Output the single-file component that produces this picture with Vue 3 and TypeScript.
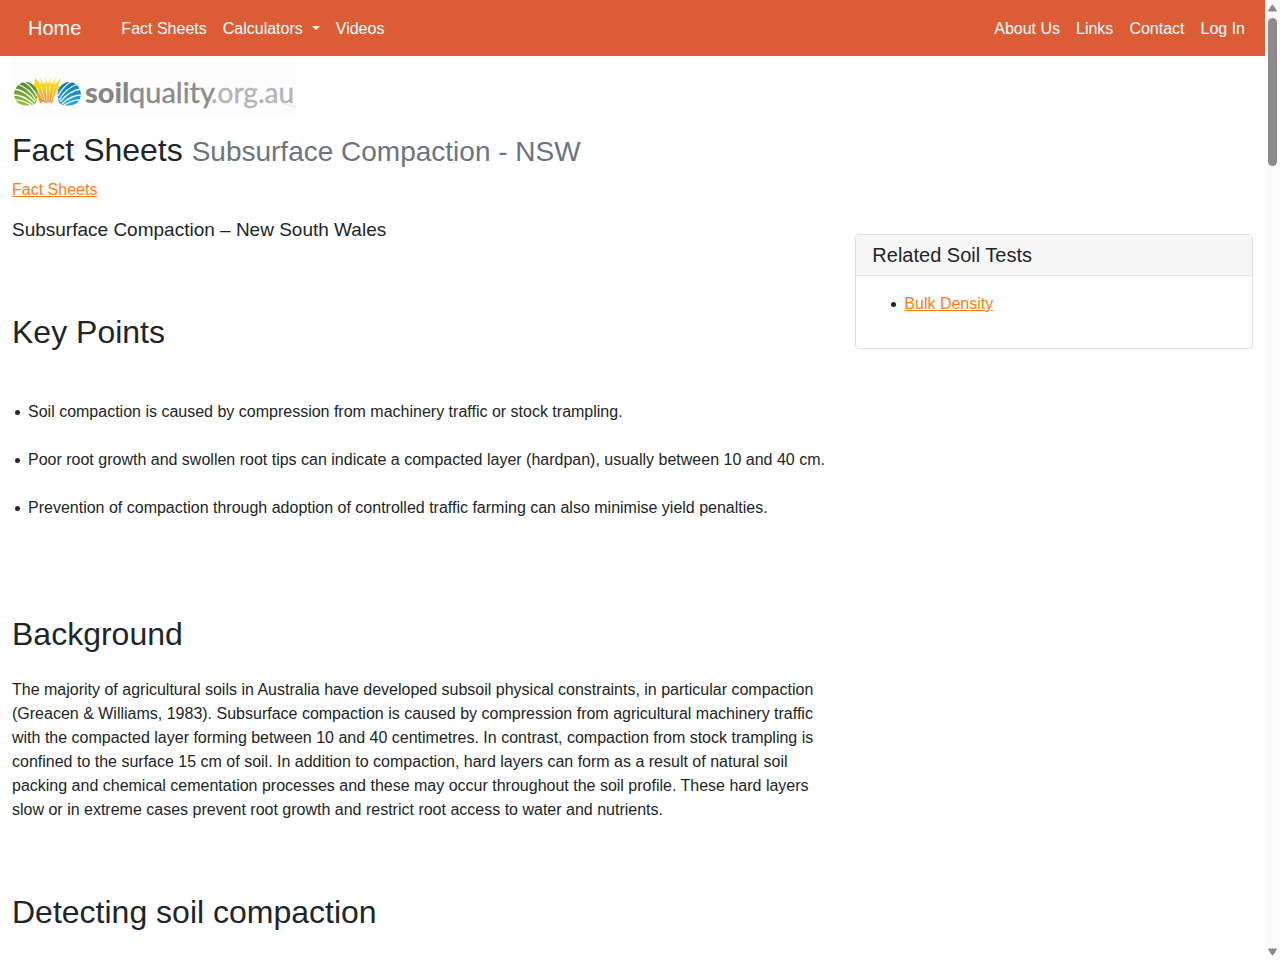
<script setup lang="ts">
interface NavItem {
  label: string
  menu?: boolean
}

const mainNav: NavItem[] = [
  { label: 'Fact Sheets' },
  { label: 'Calculators', menu: true },
  { label: 'Videos' },
]
const sideNav: NavItem[] = [
  { label: 'About Us' },
  { label: 'Links' },
  { label: 'Contact' },
  { label: 'Log In' },
]
const keyPoints: string[] = [
  'Soil compaction is caused by compression from machinery traffic or stock trampling.',
  'Poor root growth and swollen root tips can indicate a compacted layer (hardpan), usually between 10 and 40 cm.',
  'Prevention of compaction through adoption of controlled traffic farming can also minimise yield penalties.',
]
const soilTests: string[] = ['Bulk Density']
</script>

<template>
  <div class="window">
    <div class="page">
      <nav class="navbar">
        <a class="brand" href="#">Home</a>
        <ul class="nav">
          <li v-for="item in mainNav" :key="item.label">
            <button v-if="item.menu" class="nav-link" type="button" aria-haspopup="true">
              {{ item.label }}<span class="caret"></span>
            </button>
            <a v-else class="nav-link" href="#">{{ item.label }}</a>
          </li>
        </ul>
        <ul class="nav nav-end">
          <li v-for="item in sideNav" :key="item.label">
            <a class="nav-link" href="#">{{ item.label }}</a>
          </li>
        </ul>
      </nav>

      <header class="masthead">
        <a class="logo" href="#" aria-label="soilquality.org.au">
          <svg width="285" height="58" viewBox="0 0 285 58">
            <defs>
              <linearGradient id="leaf" x1="0" y1="0" x2="0" y2="1">
                <stop offset="0" stop-color="#4f8430" />
                <stop offset="1" stop-color="#9cc52c" />
              </linearGradient>
              <linearGradient id="sun" gradientUnits="userSpaceOnUse" x1="0" y1="21" x2="0" y2="46">
                <stop offset="0" stop-color="#fdd800" />
                <stop offset="0.4" stop-color="#fdd21c" />
                <stop offset="1" stop-color="#f0862c" />
              </linearGradient>
              <linearGradient id="water" x1="0" y1="0" x2="0" y2="1">
                <stop offset="0" stop-color="#0878bd" />
                <stop offset="1" stop-color="#22aae6" />
              </linearGradient>
            </defs>
            <rect width="285" height="58" fill="#fdfdfd" />
            <path
              fill="url(#sun)"
              d="M23 22l5 6 2 0-3-7 5 7 2-1-2-7 3 7h2l3-7-2 7 2 1 5-7-3 7 2 0 5-6-3 8 2 1-4 5-4 11-1 0-1-2-1 2-1-2-1 3-1-3-1 3-1-3-1 2-1-2-1 2-1 0-4-11-4-5 2-1z"
            />
            <path
              d="M25 32l6 12M29 30l4 15M34 29l1 16M38 29l-1 16M43 30l-4 15M47 32l-6 12"
              stroke="#fdfdfd"
              stroke-width="0.800"
              fill="none"
            />
            <path
              fill="url(#leaf)"
              d="M2 38C3 30 8 26 14 26c5 0 9 4 11 8 1 4 0 9-1 13-6 4-16 3-19-1-2-3-3-5-3-8z"
            />
            <path
              d="M10 25c7 3 12 9 15 15M5 28c9 3 15 9 19 16M2 33c9 1 16 7 21 13M1 39c9 0 15 4 20 9M1 44c7-1 13 2 18 5"
              stroke="#fdfdfd"
              stroke-width="1.300"
              fill="none"
            />
            <path
              fill="url(#water)"
              d="M69 38c-1-8-6-12-12-12-5 0-9 4-11 8-1 4 0 9 1 13 6 4 16 3 19-1 2-3 3-5 3-8z"
            />
            <path
              d="M61 25c-7 3-12 9-15 15M66 28c-9 3-15 9-19 16M69 33c-9 1-16 7-21 13M70 39c-9 0-15 4-20 9M70 44c-7-1-13 2-18 5"
              stroke="#fdfdfd"
              stroke-width="1.300"
              fill="none"
            />
            <path d="M264 46c7 1 14 2 20 4v2c-6-2-12-4-20-6z" fill="#eeeee9" />
            <text x="73" y="47" class="logo-soil">soil</text>
            <text x="117" y="47" class="logo-quality">quality</text>
            <text x="199" y="47" class="logo-domain">.org.au</text>
          </svg>
        </a>
        <h1>Fact Sheets <small>Subsurface Compaction - NSW</small></h1>
        <a class="link" href="#">Fact Sheets</a>
      </header>

      <div class="columns">
        <main class="article">
          <p class="lead">Subsurface Compaction – New South Wales</p>
          <h2>Key Points</h2>
          <ul class="bullets points">
            <li v-for="point in keyPoints" :key="point">{{ point }}</li>
          </ul>
          <h2>Background</h2>
          <p class="body-text">
            The majority of agricultural soils in Australia have developed subsoil physical constraints, in
            particular compaction (Greacen &amp; Williams, 1983). Subsurface compaction is caused by compression
            from agricultural machinery traffic with the compacted layer forming between 10 and 40 centimetres.
            In contrast, compaction from stock trampling is confined to the surface 15 cm of soil. In addition
            to compaction, hard layers can form as a result of natural soil packing and chemical cementation
            processes and these may occur throughout the soil profile. These hard layers slow or in extreme
            cases prevent root growth and restrict root access to water and nutrients.
          </p>
          <h2>Detecting soil compaction</h2>
        </main>
        <aside class="side">
          <section class="card">
            <h3>Related Soil Tests</h3>
            <ul class="bullets">
              <li v-for="test in soilTests" :key="test"><a class="link" href="#">{{ test }}</a></li>
            </ul>
          </section>
        </aside>
      </div>
    </div>

    <div class="scrollbar" aria-hidden="true">
      <svg width="15" height="18" viewBox="0 0 15 18"><path d="M3.500 11h8L8.200 5.500Q7.500 4.500 6.800 5.500z" fill="#8b8b8b" stroke="#8b8b8b" stroke-linejoin="round" /></svg>
      <div class="thumb"></div>
      <svg class="down" width="15" height="18" viewBox="0 0 15 18"><path d="M3.500 7h8L8.200 12.500Q7.500 13.500 6.800 12.500z" fill="#8b8b8b" stroke="#8b8b8b" stroke-linejoin="round" /></svg>
    </div>
  </div>
</template>

<style>
body {
  margin: 0;
  background: #fff;
}
</style>

<style scoped>
.window {
  display: flex;
  height: 100vh;
  overflow: hidden;
  font-family: "Liberation Sans", Arial, sans-serif;
  font-size: 16px;
  line-height: 24px;
  color: #212529;
}
.page {
  flex: 1;
  min-width: 0;
}
.navbar {
  display: flex;
  align-items: center;
  height: 56px;
  padding: 0 12px;
  background: #dc5c36;
}
.brand {
  margin: 0 32px 0 16px;
  font-size: 20px;
  color: #fff;
  text-decoration: none;
}
.nav {
  display: flex;
  margin: 0;
  padding: 0;
  list-style: none;
}
.nav-end {
  margin-left: auto;
}
.nav-link {
  display: block;
  padding: 9px 8px 7px;
  border: 0;
  background: none;
  font: inherit;
  color: #fff;
  text-decoration: none;
}
.caret {
  display: inline-block;
  margin-left: 9px;
  vertical-align: 4px;
  border-top: 4px solid #fff;
  border-left: 4px solid transparent;
  border-right: 4px solid transparent;
}
.masthead {
  padding: 0 12px;
}
.logo {
  display: block;
  margin-bottom: 17px;
}
.logo svg {
  display: block;
}
.logo text {
  font-family: Lato, sans-serif;
  font-size: 29px;
  stroke-width: 0.4px;
}
.logo-soil {
  font-weight: 900;
  fill: #858686;
}
.logo-quality {
  fill: #8b8c8c;
  stroke: #8b8c8c;
}
.logo .logo-domain {
  font-size: 28px;
  fill: #b4b6b5;
  stroke: #b4b6b5;
}
h1,
h2,
h3,
p {
  margin: 0;
  font-weight: 400;
}
h1,
h2 {
  font-size: 32px;
  line-height: 38px;
}
h1 {
  margin-bottom: 7px;
}
h1 small {
  font-size: 28px;
  color: #6c757d;
}
.link {
  color: #fd7e14;
  text-decoration: underline;
}
.columns {
  display: grid;
  grid-template-columns: 2fr 1fr;
}
.article,
.side {
  padding: 16px 12px 0;
}
.lead {
  margin-bottom: 71px;
  font-size: 19px;
}
.bullets {
  list-style: none;
}
.bullets li {
  display: flex;
  gap: 8px;
}
.bullets li::before {
  content: "";
  flex: none;
  width: 5px;
  height: 5px;
  margin-top: 10px;
  border-radius: 50%;
  background: #212529;
}
.points {
  margin: 49px 0 95px;
  padding-left: 3px;
}
.points li + li {
  margin-top: 24px;
}
.body-text {
  margin: 25px 0 71px;
}
.card {
  margin-top: 16px;
  border: 1px solid #dfdfdf;
  border-radius: 4px;
}
.card h3 {
  padding: 8px 16px;
  border-bottom: 1px solid #e6e6e6;
  background: #f7f7f7;
  font-size: 20px;
}
.card ul {
  margin: 16px 16px 32px;
  padding-left: 19px;
}
.scrollbar {
  display: flex;
  flex-direction: column;
  width: 15px;
  background: #fcfcfc;
}
.thumb {
  width: 9px;
  height: 148px;
  margin: 0 3px;
  border-radius: 5px;
  background: #8b8b8b;
}
.down {
  margin-top: auto;
}
</style>
